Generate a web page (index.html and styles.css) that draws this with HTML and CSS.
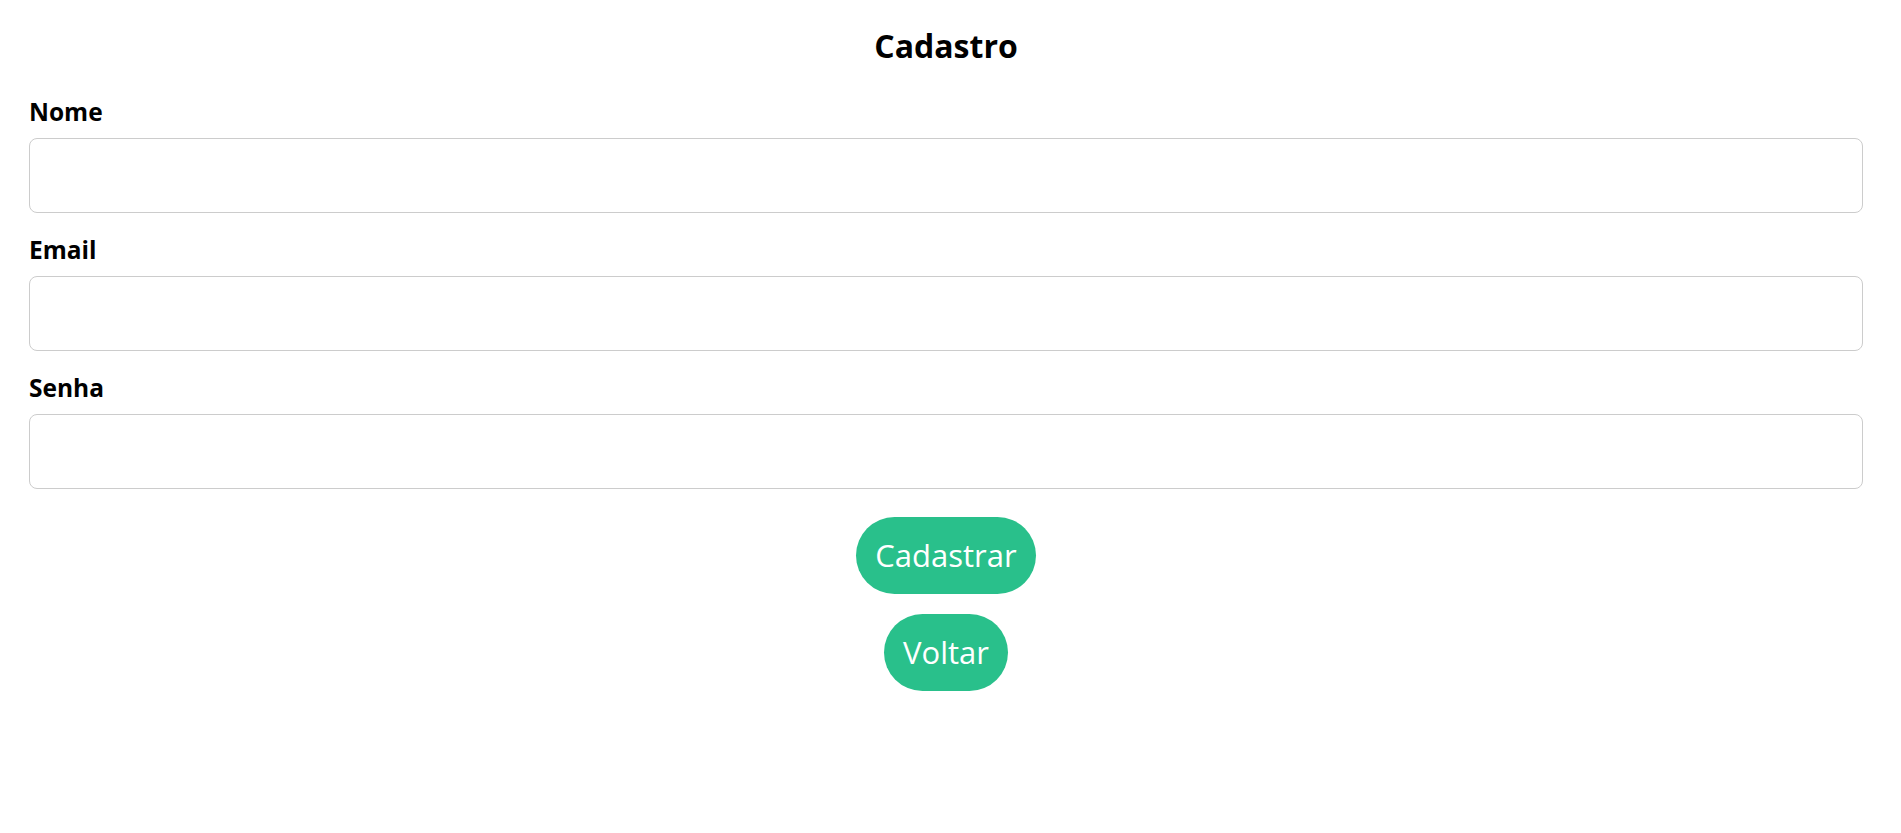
FILE: index.html
```html
<!DOCTYPE html>
<html lang="pt">
<head>
<meta charset="utf-8">
<title>Cadastro</title>
<link rel="stylesheet" href="styles.css">
</head>
<body>
<main class="page">
  <h1 class="title">Cadastro</h1>
  <form class="form">
    <div class="field">
      <label class="label" for="nome">Nome</label>
      <input class="input" id="nome" type="text">
    </div>
    <div class="field">
      <label class="label" for="email">Email</label>
      <input class="input" id="email" type="email">
    </div>
    <div class="field">
      <label class="label" for="senha">Senha</label>
      <input class="input" id="senha" type="password">
    </div>
    <div class="actions">
      <button type="button" class="btn">Cadastrar</button>
      <button type="button" class="btn">Voltar</button>
    </div>
  </form>
</main>
</body>
</html>
```

FILE: styles.css
```css
html, body {
  margin: 0;
  padding: 0;
  background: #ffffff;
}

body {
  font-family: "Open Sans", "Noto Sans", "Liberation Sans", sans-serif;
  color: #000;
}

.page {
  padding: 26px 38px 0 29px;
}

.title {
  margin: 0;
  font-size: 32px;
  line-height: 40px;
  font-weight: 700;
  text-align: center;
}

.form {
  margin-top: 31px;
  display: flex;
  flex-direction: column;
  gap: 22px;
}

.field {
  display: flex;
  flex-direction: column;
}

.label {
  font-size: 24.5px;
  line-height: 30px;
  font-weight: 700;
  margin-bottom: 11px;
}

.input {
  box-sizing: border-box;
  width: 100%;
  height: 75px;
  border: 1px solid #cccccc;
  border-radius: 8px;
  background: #fff;
  padding: 0 12px;
  font: inherit;
  outline: none;
}

.actions {
  margin-top: 6px;
  display: flex;
  flex-direction: column;
  align-items: center;
  gap: 20px;
}

.btn {
  box-sizing: border-box;
  height: 77px;
  padding: 0 19px;
  border: none;
  border-radius: 40px;
  background: #29c08b;
  color: #ffffff;
  font-family: "Open Sans", "Noto Sans", "Liberation Sans", sans-serif;
  font-size: 31px;
  line-height: 37px;
  font-weight: 400;
  cursor: pointer;
}
```
